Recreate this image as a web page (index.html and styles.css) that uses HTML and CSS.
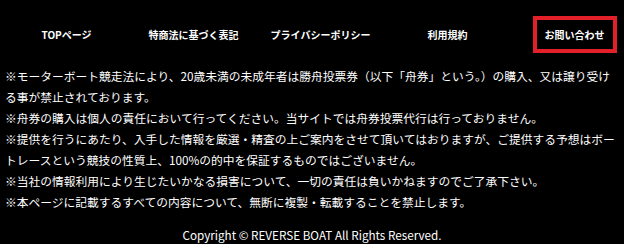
FILE: index.html
```html
<!DOCTYPE html>
<html lang="ja">
  <head>
    <meta charset="UTF-8">
    <title>REVERSE BOAT</title>
    <link rel="stylesheet" href="styles.css">
  </head>
  <body>
    <footer class="site-footer">
      <nav class="footer-nav">
        <a href="#">TOPページ</a>
        <a href="#">特商法に基づく表記</a>
        <a href="#">プライバシーポリシー</a>
        <a href="#">利用規約</a>
        <a href="#" class="footer-nav__contact">お問い合わせ</a>
      </nav>
      <div class="footer-notes">
        <p>※モーターボート競走法により、20歳未満の未成年者は勝舟投票券（以下「舟券」という。）の購入、又は譲り受ける事が禁止されております。</p>
        <p>※舟券の購入は個人の責任において行ってください。当サイトでは舟券投票代行は行っておりません。</p>
        <p>※提供を行うにあたり、入手した情報を厳選・精査の上ご案内をさせて頂いてはおりますが、ご提供する予想はボートレースという競技の性質上、100%の的中を保証するものではございません。</p>
        <p>※当社の情報利用により生じたいかなる損害について、一切の責任は負いかねますのでご了承下さい。</p>
        <p>※本ページに記載するすべての内容について、無断に複製・転載することを禁止します。</p>
      </div>
      <p class="copyright">Copyright © REVERSE BOAT All Rights Reserved.</p>
    </footer>
  </body>
</html>
```

FILE: styles.css
```css
body {
  margin: 0;
  background: #000;
  color: #fff;
  font-family: "Noto Sans CJK JP", "Noto Sans", sans-serif;
  overflow: hidden;
}

.footer-nav {
  display: grid;
  grid-template-columns: repeat(5, 127px);
  align-items: center;
  justify-items: center;
  padding: 16px 0 0 3px;
  height: 37px;
}

.footer-nav a {
  color: #fff;
  text-decoration: none;
  font-size: 10px;
  font-weight: bold;
  line-height: 11px;
}

.footer-nav__contact {
  border: 4px solid #e3202a;
  padding: 9px 8px;
}

.footer-notes {
  padding: 12px 5px 0;
}

.footer-notes p {
  margin: 0;
  font-size: 11.75px;
  line-height: 21px;
}

.copyright {
  margin: 13px 0 0;
  text-align: center;
  font-size: 11.7px;
  line-height: 20px;
}
```
